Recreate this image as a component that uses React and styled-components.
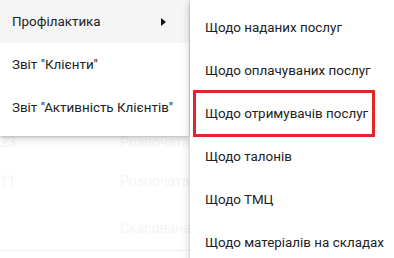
import React from "react";
import styled, { createGlobalStyle } from "styled-components";

const Global = createGlobalStyle`
  html, body { margin: 0; padding: 0; background: #fff; }
  body { font-family: Roboto, "Noto Sans", Arial, sans-serif; overflow: hidden; }
`;

const Page = styled.div`
  position: relative;
  width: 394px;
  height: 258px;
  overflow: hidden;
  background: #fff;
`;

const Table = styled.div`
  padding-top: 128px;
  display: flex;
  flex-direction: column;
`;

const Row = styled.div`
  display: grid;
  grid-template-columns: 120px 1fr;
  align-items: center;
  height: ${(p) => p.$h}px;
  font-size: 14px;
  color: #f4f4f4;
  border-bottom: ${(p) => (p.$line ? "1px solid #efefef" : "none")};
`;

const Cell = styled.span`
  white-space: nowrap;
`;

const Menu = styled.div`
  position: absolute;
  top: ${(p) => p.$top}px;
  left: ${(p) => p.$left}px;
  width: ${(p) => p.$w}px;
  background: #fff;
  padding: ${(p) => p.$pad};
  box-shadow: 0 2px 8px rgba(0, 0, 0, 0.22), 0 1px 2px rgba(0, 0, 0, 0.12);
  z-index: ${(p) => p.$z};
`;

const Item = styled.div`
  position: relative;
  display: flex;
  align-items: center;
  justify-content: space-between;
  height: 43px;
  padding: 0 ${(p) => p.$padR}px 0 ${(p) => p.$padL}px;
  background: ${(p) => (p.$active ? "#f5f5f5" : "transparent")};
  color: #222;
  font-size: 13.4px;
  white-space: nowrap;
`;

const Arrow = styled.span`
  width: 0;
  height: 0;
  border-top: 4.5px solid transparent;
  border-bottom: 4.5px solid transparent;
  border-left: 5px solid #111;
`;

const Highlight = styled.div`
  position: absolute;
  left: 3px;
  top: -2px;
  width: 182px;
  height: 47px;
  box-sizing: border-box;
  border: 3px solid #e3252a;
  pointer-events: none;
`;

const subItems = [
  "Щодо наданих послуг",
  "Щодо оплачуваних послуг",
  "Щодо отримувачів послуг",
  "Щодо талонів",
  "Щодо ТМЦ",
  "Щодо матеріалів на складах",
];

export default function App() {
  return (
    <Page>
      <Global />
      <Table>
        <Row $h={28}><Cell>23</Cell><Cell>Розпочата</Cell></Row>
        <Row $h={50}><Cell>11</Cell><Cell>Розпочата</Cell></Row>
        <Row $h={44} $line><Cell></Cell><Cell>Скасована</Cell></Row>
      </Table>
      <Menu $top={0} $left={0} $w={189} $pad="0 0 7px 0" $z={1}>
        <Item $active $padL={12} $padR={23}>
          Профілактика
          <Arrow />
        </Item>
        <Item $padL={12} $padR={12}>Звіт "Клієнти"</Item>
        <Item $padL={12} $padR={12}>Звіт "Активність Клієнтів"</Item>
      </Menu>
      <Menu $top={0} $left={190} $w={220} $pad="6px 0 8px 0" $z={2}>
        {subItems.map((t, i) => (
          <Item key={t} $padL={15} $padR={16}>
            {t}
            {i === 2 && <Highlight />}
          </Item>
        ))}
      </Menu>
    </Page>
  );
}
